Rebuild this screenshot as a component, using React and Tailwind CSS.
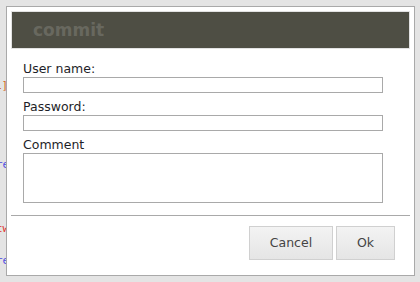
const Field = ({ label, top, children }) => (
    <div className={top}>
        <div className="h-[16px] leading-[16px] text-[12.5px] text-[#1e1e28]">{label}</div>
        {children}
    </div>
)

const App = () => {
    return (
        <div className="relative w-[420px] h-[282px] overflow-hidden bg-[#e4e4e4] pt-[6px] pl-[6px] font-['DejaVu_Sans',Verdana,sans-serif]">
            <span className="absolute left-[-5px] top-[78px] text-[11px] text-[#d2691e] font-['DejaVu_Sans_Mono',monospace]">1]</span>
            <span className="absolute left-[-4px] top-[157px] text-[11px] text-[#5050e0] font-['DejaVu_Sans_Mono',monospace]">re</span>
            <span className="absolute left-[-4px] top-[221px] text-[11px] text-[#e03030] font-['DejaVu_Sans_Mono',monospace]">tw</span>
            <span className="absolute left-[-4px] top-[253px] text-[11px] text-[#5050e0] font-['DejaVu_Sans_Mono',monospace]">re</span>

            <div className="relative w-[409px] h-[270px] border border-[#a9a9a9] bg-white p-[4px]">
                <div className="h-[38px] border border-[#e2e2e2] bg-[#4e4e44] pl-[21px] flex items-center">
                    <span className="text-[17px] font-bold text-[#68685f] leading-none">commit</span>
                </div>

                <div className="pl-[12px]">
                    <Field label="User name:" top="mt-[12px]">
                        <div className="w-[360px] h-[16px] border border-[#a9a9a9] bg-white"></div>
                    </Field>
                    <Field label="Password:" top="mt-[6px]">
                        <div className="w-[360px] h-[16px] border border-[#a9a9a9] bg-white"></div>
                    </Field>
                    <Field label="Comment" top="mt-[6px]">
                        <div className="w-[360px] h-[50px] border border-[#a9a9a9] bg-white"></div>
                    </Field>
                </div>

                <div className="mt-[12px] h-px bg-[#a9a9a9]"></div>

                <div className="flex justify-end gap-[3px] pr-[15px] mt-[10px]">
                    <button className="w-[84px] h-[34px] border border-[#d0d0d0] bg-[linear-gradient(to_bottom,#f3f3f3,#e5e5e5)] text-[12.5px] text-[#444]">Cancel</button>
                    <button className="w-[59px] h-[34px] border border-[#d0d0d0] bg-[linear-gradient(to_bottom,#f3f3f3,#e5e5e5)] text-[12.5px] text-[#444]">Ok</button>
                </div>
            </div>
        </div>
    )
}

export default App
